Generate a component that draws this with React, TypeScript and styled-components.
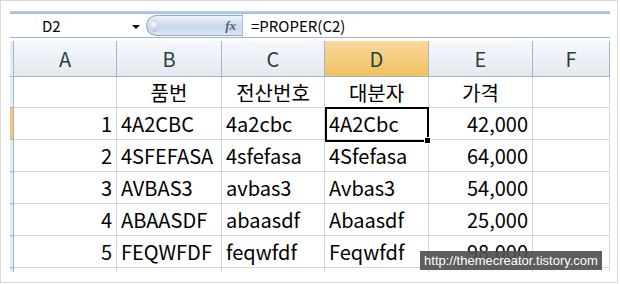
import * as React from 'react';
import styled, { createGlobalStyle, css } from 'styled-components';

const GlobalStyle = createGlobalStyle`
  html, body {
    margin: 0;
    padding: 0;
    background: #ffffff;
  }
`;

const FONT = `"Noto Sans CJK KR", "Noto Sans", sans-serif`;

const Frame = styled.div`
  box-sizing: border-box;
  width: 618px;
  height: 283px;
  border: 1px solid #d9d9d9;
  padding: 10px 0 0 9px;
  position: relative;
  overflow: hidden;
  font-family: ${FONT};
`;

const Sheet = styled.div`
  width: 600px;
  height: 261px;
  overflow: hidden;
  position: relative;
`;

const TopStrip = styled.div`
  height: 3px;
  background: linear-gradient(#b9d0ea, #9dbbe0);
`;

const FormulaBar = styled.div`
  display: flex;
  height: 23px;
  border-bottom: 1px solid #9fb4cf;
  background: #ffffff;
`;

const NameBox = styled.div`
  width: 136px;
  display: flex;
  align-items: center;
  justify-content: space-between;
  padding: 0 6px 0 32px;
  box-sizing: border-box;
  font-size: 15px;
  color: #000;
`;

const Arrow = styled.span`
  width: 0;
  height: 0;
  border-left: 4px solid transparent;
  border-right: 4px solid transparent;
  border-top: 4px solid #000;
  margin-top: 2px;
`;

const Pill = styled.div`
  width: 96px;
  height: 21px;
  margin-top: 1px;
  border: 1px solid #8fa9c9;
  border-right: none;
  border-radius: 11px 0 0 11px;
  box-sizing: border-box;
  background: linear-gradient(#eef3fa, #c9d8ec 55%, #dbe6f4);
  display: flex;
  align-items: center;
  justify-content: space-between;
  padding: 0 6px 0 3px;
`;

const Knob = styled.span`
  width: 9px;
  height: 13px;
  border-radius: 50%;
  background: radial-gradient(circle at 40% 40%, #ffffff, #b9c7d8 70%, #9aaabd);
`;

const Fx = styled.span`
  font-family: "Liberation Serif", serif;
  font-style: italic;
  font-weight: bold;
  font-size: 13px;
  color: #5a6270;
`;

const FormulaInput = styled.div`
  flex: 1;
  border-left: 1px solid #a9bdd6;
  display: flex;
  align-items: center;
  padding-left: 8px;
  font-size: 15px;
  color: #000;
`;

const Gap = styled.div`
  height: 3px;
  background: #ffffff;
`;

const Grid = styled.div`
  display: grid;
  grid-template-columns: 4px 103px 105px 103px 104px 104px 77px;
  grid-template-rows: 36px 31px 32px 32px 32px 32px 32px 8px;
`;

const ColHead = styled.div<{ $active?: boolean }>`
  box-sizing: border-box;
  border-right: 1px solid #9eb6ce;
  border-bottom: 1px solid #9eb6ce;
  display: flex;
  align-items: center;
  justify-content: center;
  font-size: 20px;
  color: #27413e;
  background: ${({ $active }) =>
    $active
      ? 'linear-gradient(#f9d99f, #f1c15f)'
      : 'linear-gradient(#f6f8fb, #e4e9f1)'};
`;

const Corner = styled(ColHead)`
  background: #e4ecf7;
`;

const RowHead = styled.div<{ $active?: boolean }>`
  box-sizing: border-box;
  border-right: 1px solid #9eb6ce;
  border-bottom: 1px solid #9eb6ce;
  background: ${({ $active }) => ($active ? '#f5c77a' : '#e4ecf7')};
`;

const Cell = styled.div<{ $align?: 'left' | 'right' | 'center' }>`
  box-sizing: border-box;
  border-right: 1px solid #d0d7e5;
  border-bottom: 1px solid #d0d7e5;
  display: flex;
  align-items: center;
  padding: 0 4px;
  font-size: 20px;
  color: #000;
  white-space: nowrap;
  overflow: hidden;
  ${({ $align }) =>
    $align === 'right'
      ? css`justify-content: flex-end;`
      : $align === 'center'
      ? css`justify-content: center;`
      : css`justify-content: flex-start;`}
`;

const Selection = styled.div`
  position: absolute;
  left: 315px;
  top: 96px;
  width: 104px;
  height: 35px;
  box-sizing: border-box;
  border: 2px solid #000;
  pointer-events: none;
`;

const Handle = styled.span`
  position: absolute;
  right: -4px;
  bottom: -4px;
  width: 5px;
  height: 5px;
  background: #000;
  border: 1px solid #fff;
`;

const Watermark = styled.div`
  position: absolute;
  left: 419px;
  top: 250px;
  width: 182px;
  height: 19px;
  background: rgba(80, 80, 80, 0.92);
  color: #ffffff;
  font-family: "Liberation Sans", sans-serif;
  font-size: 13px;
  white-space: nowrap;
  display: flex;
  align-items: center;
  justify-content: center;
`;

const columns = ['A', 'B', 'C', 'D', 'E', 'F'];

const header = ['품번', '전산번호', '대분자', '가격'];

const rows = [
  ['1', '4A2CBC', '4a2cbc', '4A2Cbc', '42,000'],
  ['2', '4SFEFASA', '4sfefasa', '4Sfefasa', '64,000'],
  ['3', 'AVBAS3', 'avbas3', 'Avbas3', '54,000'],
  ['4', 'ABAASDF', 'abaasdf', 'Abaasdf', '25,000'],
  ['5', 'FEQWFDF', 'feqwfdf', 'Feqwfdf', '98,000'],
];

export default function App() {
  return (
    <>
      <GlobalStyle />
      <Frame>
        <Sheet>
          <TopStrip />
          <FormulaBar>
            <NameBox>
              D2
              <Arrow />
            </NameBox>
            <Pill>
              <Knob />
              <Fx>fx</Fx>
            </Pill>
            <FormulaInput>=PROPER(C2)</FormulaInput>
          </FormulaBar>
          <Gap />
          <Grid>
            <Corner />
            {columns.map((c) => (
              <ColHead key={c} $active={c === 'D'}>
                {c}
              </ColHead>
            ))}

            <RowHead />
            <Cell />
            {header.map((h) => (
              <Cell key={h} $align="center">
                {h}
              </Cell>
            ))}
            <Cell />

            {rows.map((r, i) => (
              <React.Fragment key={r[0]}>
                <RowHead $active={i === 0} />
                <Cell $align="right">{r[0]}</Cell>
                <Cell>{r[1]}</Cell>
                <Cell>{r[2]}</Cell>
                <Cell>{r[3]}</Cell>
                <Cell $align="right">{r[4]}</Cell>
                <Cell />
              </React.Fragment>
            ))}

            <RowHead />
            {columns.map((c) => (
              <Cell key={`last-${c}`} />
            ))}
          </Grid>
          <Selection>
            <Handle />
          </Selection>
        </Sheet>
        <Watermark>http://themecreator.tistory.com</Watermark>
      </Frame>
    </>
  );
}
